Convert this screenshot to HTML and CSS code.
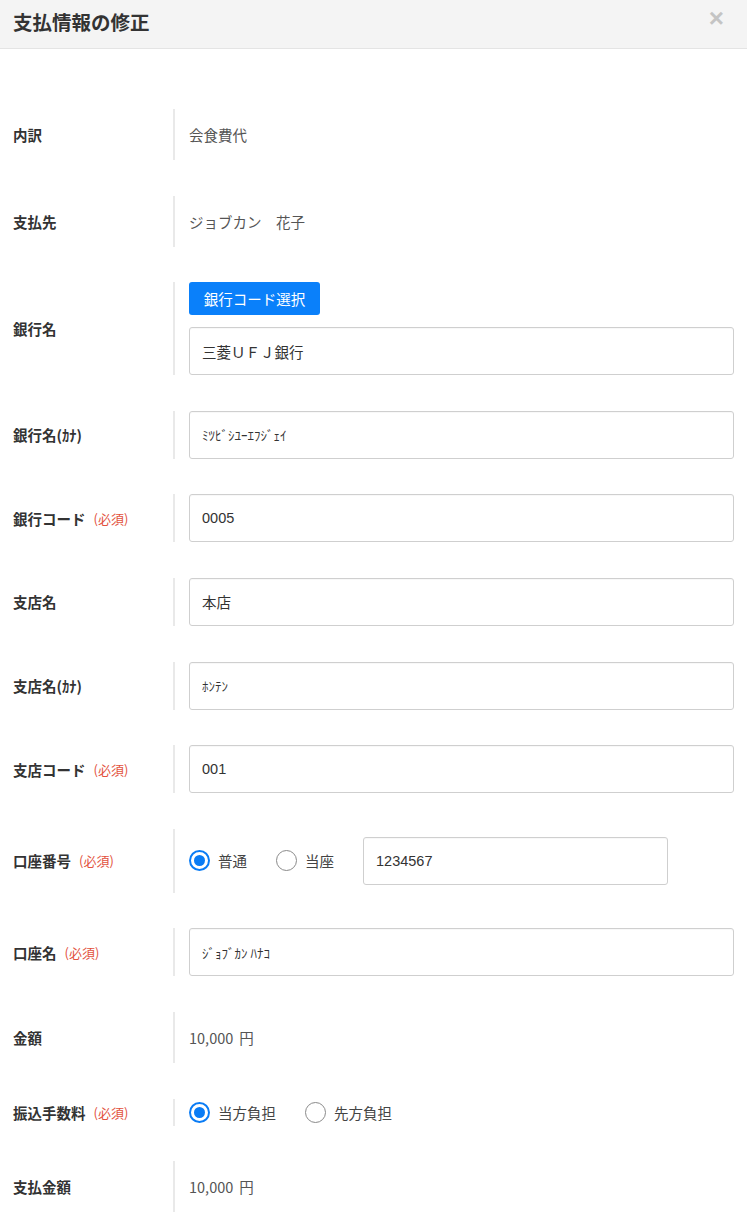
FILE: index.html
```html
<!DOCTYPE html>
<html lang="ja">
<head>
<meta charset="utf-8">
<title>支払情報の修正</title>
<link rel="stylesheet" href="styles.css">
</head>
<body>
<div class="modal">
  <div class="header">
    <h1 class="title">支払情報の修正</h1>
    <span class="close">×</span>
  </div>
  <div class="content">
    <div class="row row-text">
      <div class="label">内訳</div>
      <div class="value">会食費代</div>
    </div>
    <div class="row row-text">
      <div class="label">支払先</div>
      <div class="value">ジョブカン　花子</div>
    </div>
    <div class="row row-bank">
      <div class="label">銀行名</div>
      <div class="value stack">
        <button class="btn">銀行コード選択</button>
        <div class="input">三菱ＵＦＪ銀行</div>
      </div>
    </div>
    <div class="row row-input">
      <div class="label">銀行名(ｶﾅ)</div>
      <div class="value"><div class="input kana">ﾐﾂﾋﾞｼﾕｰｴﾌｼﾞｪｲ</div></div>
    </div>
    <div class="row row-input">
      <div class="label">銀行コード<span class="req">(必須)</span></div>
      <div class="value"><div class="input">0005</div></div>
    </div>
    <div class="row row-input">
      <div class="label">支店名</div>
      <div class="value"><div class="input">本店</div></div>
    </div>
    <div class="row row-input">
      <div class="label">支店名(ｶﾅ)</div>
      <div class="value"><div class="input kana">ﾎﾝﾃﾝ</div></div>
    </div>
    <div class="row row-input">
      <div class="label">支店コード<span class="req">(必須)</span></div>
      <div class="value"><div class="input">001</div></div>
    </div>
    <div class="row row-account">
      <div class="label">口座番号<span class="req">(必須)</span></div>
      <div class="value radios">
        <label class="radio"><span class="dot checked"></span>普通</label>
        <label class="radio"><span class="dot"></span>当座</label>
        <div class="input short">1234567</div>
      </div>
    </div>
    <div class="row row-input">
      <div class="label">口座名<span class="req">(必須)</span></div>
      <div class="value"><div class="input kana">ｼﾞｮﾌﾞｶﾝ ﾊﾅｺ</div></div>
    </div>
    <div class="row row-text">
      <div class="label">金額</div>
      <div class="value">10,000<span class="yen">円</span></div>
    </div>
    <div class="row row-fee">
      <div class="label">振込手数料<span class="req">(必須)</span></div>
      <div class="value radios">
        <label class="radio"><span class="dot checked"></span>当方負担</label>
        <label class="radio"><span class="dot"></span>先方負担</label>
      </div>
    </div>
    <div class="row row-text">
      <div class="label">支払金額</div>
      <div class="value">10,000<span class="yen">円</span></div>
    </div>
  </div>
</div>
</body>
</html>
```

FILE: styles.css
```css
* { box-sizing: border-box; }
html, body { margin: 0; padding: 0; background: #fff; }
body {
  font-family: "Noto Sans CJK JP", "Noto Sans", sans-serif;
  color: #333;
  width: 747px;
}
.header {
  height: 49px;
  background: #f4f4f4;
  border-bottom: 1px solid #e4e4e4;
  display: flex;
  align-items: center;
  justify-content: space-between;
  padding: 0 23px 0 13px;
}
.title {
  margin: 0;
  font-size: 19.5px;
  font-weight: 700;
  color: #333;
  position: relative;
  top: -3px;
}
.close {
  font-family: "Liberation Sans", sans-serif;
  font-size: 26px;
  font-weight: 700;
  color: #c4c4c4;
  line-height: 1;
  position: relative;
  top: -6px;
}
.content {
  padding: 60px 13px 20px 13px;
  display: flex;
  flex-direction: column;
  gap: 35.6px;
}
.row {
  display: flex;
  align-items: stretch;
}
.label {
  width: 160px;
  flex: none;
  display: flex;
  align-items: center;
  font-size: 14.5px;
  font-weight: 700;
  color: #333;
}
.req {
  color: #e2513d;
  font-size: 13px;
  font-weight: 400;
  margin-left: 8px;
}
.value {
  flex: 1;
  border-left: 2px solid #e9e9e9;
  padding-left: 14px;
  display: flex;
  align-items: center;
  font-size: 14.5px;
  color: #555;
}
.yen { margin-left: 6px; }
.row-text .value { height: 51px; }
.row-input .value { height: 48px; }
.row-bank .value { height: 93px; }
.row-account .value { height: 64px; }
.row-fee .value { height: 27px; }
.stack {
  flex-direction: column;
  align-items: flex-start;
  justify-content: center;
  gap: 12px;
}
.btn {
  font-family: "Noto Sans CJK JP", sans-serif;
  font-size: 14.5px;
  color: #fff;
  background: #0a80fa;
  border: none;
  border-radius: 3px;
  height: 33px;
  width: 131px;
  padding: 0;
  line-height: 33px;
}
.input {
  width: 545px;
  height: 48px;
  border: 1px solid #cfcfcf;
  border-radius: 3px;
  display: flex;
  align-items: center;
  padding: 0 12px;
  font-family: "Liberation Sans", "Noto Sans CJK JP", sans-serif;
  font-size: 14.5px;
  color: #333;
  box-shadow: inset 0 1px 1px rgba(0,0,0,0.03);
  white-space: pre;
}
.input.kana {
  font-family: "Noto Sans CJK JP", sans-serif;
  font-size: 13px;
}
.input.short {
  width: 305px;
}
.radios { gap: 0; }
.radio {
  display: flex;
  align-items: center;
  font-size: 14.5px;
  color: #444;
  margin-right: 29px;
}
.dot {
  width: 21px;
  height: 21px;
  border-radius: 50%;
  border: 1.5px solid #8a8a8a;
  margin-right: 8px;
  position: relative;
  flex: none;
}
.dot.checked {
  border: 2px solid #0a7cf5;
}
.dot.checked::after {
  content: "";
  position: absolute;
  left: 3px;
  top: 3px;
  width: 11px;
  height: 11px;
  border-radius: 50%;
  background: #0a7cf5;
}
```
